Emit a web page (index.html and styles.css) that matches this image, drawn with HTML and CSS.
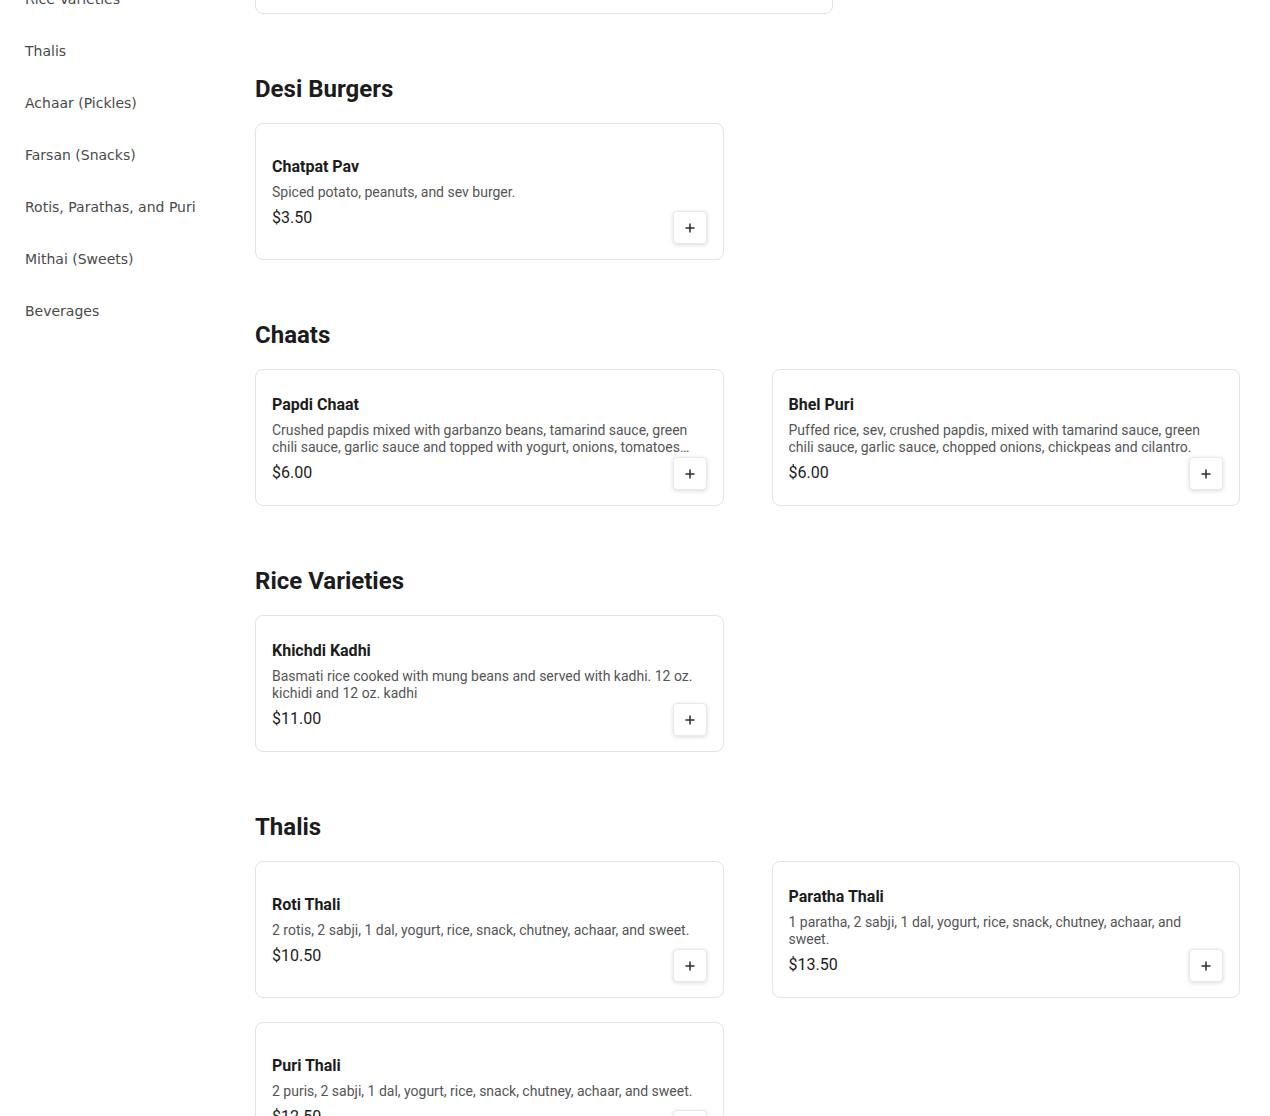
FILE: index.html
```html
<!DOCTYPE html>
<html lang="en">
<head>
<meta charset="utf-8">
<title>Menu</title>
<link rel="stylesheet" href="styles.css">
</head>
<body>
<div class="page">
  <nav class="sidebar">
    <ul class="cat-list">
      <li class="cat">Rice Varieties</li>
      <li class="cat">Thalis</li>
      <li class="cat">Achaar (Pickles)</li>
      <li class="cat">Farsan (Snacks)</li>
      <li class="cat">Rotis, Parathas, and Puri</li>
      <li class="cat">Mithai (Sweets)</li>
      <li class="cat">Beverages</li>
    </ul>
  </nav>
  <main class="menu">
    <div class="prev-card"></div>

    <section class="section">
      <h2 class="section-title">Desi Burgers</h2>
      <div class="grid">
        <div class="card">
          <div class="info">
            <div class="name">Chatpat Pav</div>
            <div class="desc">Spiced potato, peanuts, and sev burger.</div>
            <div class="price">$3.50</div>
          </div>
          <button class="add" aria-label="Add"><svg width="12" height="12" viewBox="0 0 12 12"><path d="M6 1.5v9M1.5 6h9" stroke="#2b2b2b" stroke-width="1.5" fill="none"/></svg></button>
        </div>
      </div>
    </section>

    <section class="section">
      <h2 class="section-title">Chaats</h2>
      <div class="grid">
        <div class="card">
          <div class="info">
            <div class="name">Papdi Chaat</div>
            <div class="desc">Crushed papdis mixed with garbanzo beans, tamarind sauce, green chili sauce, garlic sauce and topped with yogurt, onions, tomatoes and cilantro.</div>
            <div class="price">$6.00</div>
          </div>
          <button class="add" aria-label="Add"><svg width="12" height="12" viewBox="0 0 12 12"><path d="M6 1.5v9M1.5 6h9" stroke="#2b2b2b" stroke-width="1.5" fill="none"/></svg></button>
        </div>
        <div class="card">
          <div class="info">
            <div class="name">Bhel Puri</div>
            <div class="desc">Puffed rice, sev, crushed papdis, mixed with tamarind sauce, green chili sauce, garlic sauce, chopped onions, chickpeas and cilantro.</div>
            <div class="price">$6.00</div>
          </div>
          <button class="add" aria-label="Add"><svg width="12" height="12" viewBox="0 0 12 12"><path d="M6 1.5v9M1.5 6h9" stroke="#2b2b2b" stroke-width="1.5" fill="none"/></svg></button>
        </div>
      </div>
    </section>

    <section class="section">
      <h2 class="section-title">Rice Varieties</h2>
      <div class="grid">
        <div class="card">
          <div class="info">
            <div class="name">Khichdi Kadhi</div>
            <div class="desc">Basmati rice cooked with mung beans and served with kadhi. 12 oz. kichidi and 12 oz. kadhi</div>
            <div class="price">$11.00</div>
          </div>
          <button class="add" aria-label="Add"><svg width="12" height="12" viewBox="0 0 12 12"><path d="M6 1.5v9M1.5 6h9" stroke="#2b2b2b" stroke-width="1.5" fill="none"/></svg></button>
        </div>
      </div>
    </section>

    <section class="section">
      <h2 class="section-title">Thalis</h2>
      <div class="grid">
        <div class="card">
          <div class="info">
            <div class="name">Roti Thali</div>
            <div class="desc">2 rotis, 2 sabji, 1 dal, yogurt, rice, snack, chutney, achaar, and sweet.</div>
            <div class="price">$10.50</div>
          </div>
          <button class="add" aria-label="Add"><svg width="12" height="12" viewBox="0 0 12 12"><path d="M6 1.5v9M1.5 6h9" stroke="#2b2b2b" stroke-width="1.5" fill="none"/></svg></button>
        </div>
        <div class="card">
          <div class="info">
            <div class="name">Paratha Thali</div>
            <div class="desc">1 paratha, 2 sabji, 1 dal, yogurt, rice, snack, chutney, achaar, and sweet.</div>
            <div class="price">$13.50</div>
          </div>
          <button class="add" aria-label="Add"><svg width="12" height="12" viewBox="0 0 12 12"><path d="M6 1.5v9M1.5 6h9" stroke="#2b2b2b" stroke-width="1.5" fill="none"/></svg></button>
        </div>
        <div class="card">
          <div class="info">
            <div class="name">Puri Thali</div>
            <div class="desc">2 puris, 2 sabji, 1 dal, yogurt, rice, snack, chutney, achaar, and sweet.</div>
            <div class="price">$12.50</div>
          </div>
          <button class="add" aria-label="Add"><svg width="12" height="12" viewBox="0 0 12 12"><path d="M6 1.5v9M1.5 6h9" stroke="#2b2b2b" stroke-width="1.5" fill="none"/></svg></button>
        </div>
      </div>
    </section>
  </main>
</div>
</body>
</html>
```

FILE: styles.css
```css
* { box-sizing: border-box; }

html, body {
  margin: 0;
  padding: 0;
  background: #ffffff;
}

body {
  font-family: Roboto, "Liberation Sans", sans-serif;
  color: #1a1a1a;
}

.page {
  display: grid;
  grid-template-columns: 230px 1fr;
  padding: 0 30px 0 25px;
}

.sidebar {
  font-family: "DejaVu Sans", sans-serif;
}

.cat-list {
  list-style: none;
  margin: -27px 0 0 0;
  padding: 0;
}

.cat {
  height: 52px;
  line-height: 52px;
  font-size: 14px;
  color: #4a4a4a;
  white-space: nowrap;
}

.menu {
  display: flex;
  flex-direction: column;
  min-width: 0;
}

.prev-card {
  width: 578px;
  height: 60px;
  margin-top: -46px;
  border: 1px solid #e3e3e3;
  border-radius: 8px;
}

.section {
  margin-top: 61px;
}

.section-title {
  margin: 0 0 20px 0;
  font-size: 24px;
  line-height: 28px;
  font-weight: 700;
  color: #1c1c1c;
}

.grid {
  display: grid;
  grid-template-columns: 1fr 1fr;
  column-gap: 48px;
  row-gap: 24px;
}

.card {
  position: relative;
  display: flex;
  align-items: center;
  min-height: 137px;
  padding: 16px;
  border: 1px solid #e3e3e3;
  border-radius: 8px;
  background: #fff;
}

.info {
  width: 100%;
  padding-top: 2px;
}

.name {
  font-size: 16px;
  line-height: 24px;
  font-weight: 700;
  color: #1c1c1c;
  margin-bottom: 5px;
}

.desc {
  font-size: 14px;
  line-height: 17px;
  color: #555555;
  display: -webkit-box;
  -webkit-line-clamp: 2;
  -webkit-box-orient: vertical;
  overflow: hidden;
}

.price {
  margin-top: 5px;
  font-size: 16px;
  line-height: 24px;
  font-weight: 400;
  color: #1c1c1c;
}

.add {
  position: absolute;
  right: 16px;
  bottom: 15px;
  width: 34px;
  height: 33px;
  padding: 0;
  display: flex;
  align-items: center;
  justify-content: center;
  background: #fff;
  border: 1px solid #e8e8e8;
  border-radius: 4px;
  box-shadow: 0 1px 4px rgba(0, 0, 0, 0.14);
  cursor: pointer;
}
```
